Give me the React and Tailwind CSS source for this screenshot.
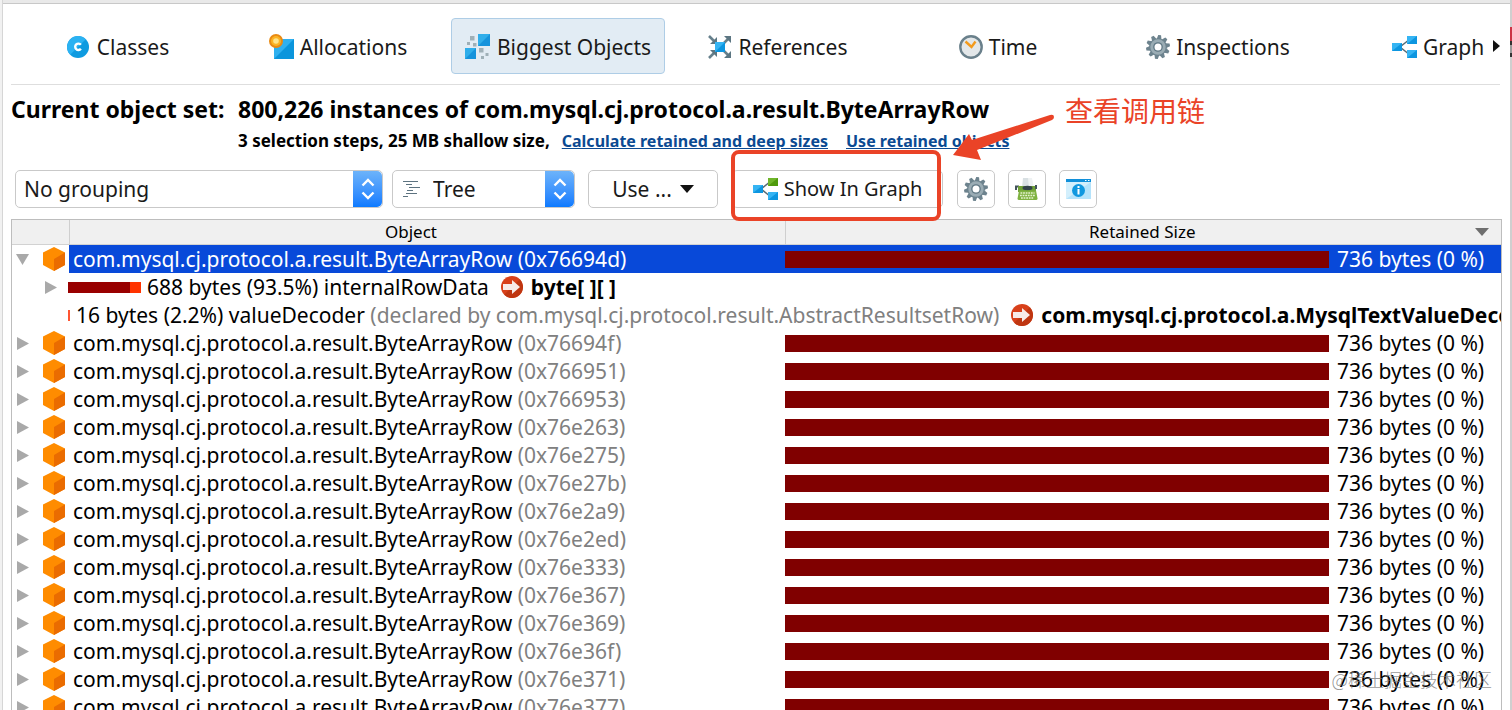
import React, { useState } from 'react';
import clsx from 'clsx';

const ADDRESSES = [
  '0x76694f',
  '0x766951',
  '0x766953',
  '0x76e263',
  '0x76e275',
  '0x76e27b',
  '0x76e2a9',
  '0x76e2ed',
  '0x76e333',
  '0x76e367',
  '0x76e369',
  '0x76e36f',
  '0x76e371',
  '0x76e377',
];

const CLASS_NAME = 'com.mysql.cj.protocol.a.result.ByteArrayRow';

const ClassesIcon = () => (
  <svg width="22" height="22" viewBox="0 0 22 22" aria-hidden="true">
    <circle cx="11" cy="11" r="11" fill="#0f9be0" />
    <path d="M3.2 18.8A11 11 0 0 1 18.8 3.2z" fill="#2bb2f2" />
    <path d="M13.9 8.8A3.200 3.200 0 1 0 13.9 12.800" fill="none" stroke="#fff" strokeWidth="2.400" />
  </svg>
);

const AllocationsIcon = () => (
  <svg width="25" height="26" viewBox="0 0 25 26" aria-hidden="true">
    <path d="M5 5h20v20H5z" fill="#0b95dc" />
    <path d="M5 5h20L5 25z" fill="#2fb0ef" />
    <circle cx="7" cy="7" r="7" fill="#e98a12" />
    <circle cx="7" cy="7" r="5" fill="#fbb324" />
    <circle cx="7" cy="7" r="2.8" fill="#ffe48a" />
  </svg>
);

const BiggestIcon = () => (
  <svg width="26" height="26" viewBox="0 0 26 26" aria-hidden="true">
    <path d="M13 0h12v12H13z M0 14h11v11H0z" fill="#1593dc" />
    <path d="M13 0h12L13 12z M0 14h11L0 25z" fill="#30aeea" />
    <path
      d="M5 2h4.500v4.500H5z M2 8h3v3H2z M8 9h3.500v3.500H8z M14 14h4.500v4.500H14z M20.500 19h3v3h-3z M16 22h3v3h-3z"
      fill="#9fb0b7"
    />
  </svg>
);

const ReferencesIcon = () => (
  <svg width="24" height="24" viewBox="0 0 24 24" aria-hidden="true">
    <g stroke="#66808c" strokeWidth="2.600" fill="none">
      <path d="M1 1l7 7 M1 23l7-7 M15 9l6-6 M15 15l6 6" />
    </g>
    <path d="M9 2v7H2z M9 22v-7H2z M16 1h7v7z M16 23h7v-7z" fill="#5c7682" />
    <path d="M7 7h10v10H7z" fill="#0d96e0" />
    <path d="M7 7h10L7 17z" fill="#35b4f3" />
  </svg>
);

const TimeIcon = () => (
  <svg width="24" height="24" viewBox="0 0 24 24" aria-hidden="true">
    <circle cx="12" cy="12" r="10.700" fill="#e3e7e9" stroke="#6a808b" strokeWidth="2.400" />
    <path d="M6.500 6.500l6 5.500 4-5.500" fill="none" stroke="#f39a1c" strokeWidth="2.400" />
  </svg>
);

const GearIcon = () => (
  <svg width="24" height="24" viewBox="0 0 24 24" aria-hidden="true">
    <g fill="#6d838e">
      {[0, 36, 72, 108, 144].map((a) => (
        <path key={a} d="M10.600 0h2.800l1 4v16l-1 4h-2.800l-1-4V4z" transform={`rotate(${a + 8} 12 12)`} />
      ))}
      <circle cx="12" cy="12" r="8.800" />
    </g>
    <circle cx="12" cy="12" r="7.700" fill="#9aacb4" />
    <circle cx="12" cy="12" r="4.800" fill="#5f7783" />
    <circle cx="12" cy="12" r="3.500" fill="#fff" />
  </svg>
);

const GraphIcon = ({ top = '#0d96e0', topLight = '#35b4f3' }) => (
  <svg width="25" height="24" viewBox="0 0 25 24" aria-hidden="true">
    <path d="M18 4L8 12l10 8" fill="none" stroke="#566b75" strokeWidth="1.500" />
    <path d="M15 1h10v8H15z" fill={top} />
    <path d="M15 1h10L15 9z" fill={topLight} />
    <path d="M15 15h10v8H15z M0 8h10v8H0z" fill="#0d96e0" />
    <path d="M15 15h10l-10 8z M0 8h10L0 16z" fill="#35b4f3" />
  </svg>
);

const TypewriterIcon = () => (
  <svg width="24" height="24" viewBox="0 0 24 24" aria-hidden="true">
    <path d="M8 1h6l1 10H7z" fill="#d9e0e3" />
    <path d="M13 1h4l2 10h-5z" fill="#eff2f3" />
    <path d="M1 13V9.500h3" fill="none" stroke="#44545c" strokeWidth="2" />
    <path d="M3 9h18v6H3z" fill="#6fa036" />
    <path d="M20 8h2v4h-2z" fill="#44545c" />
    <ellipse cx="12.500" cy="11" rx="5" ry="2.200" fill="#33424a" />
    <path d="M4 13.500h17l1.500 8q0 1.500-1.500 1.500H4q-1.500 0-1.500-1.500z" fill="#7fb241" />
    <path d="M5.500 16h14 M5 18.500h15 M6 21h13" stroke="#e5f2cf" strokeWidth="1.400" strokeDasharray="1.800 .8" />
  </svg>
);

const InfoWindowIcon = () => (
  <svg width="25" height="22" viewBox="0 0 25 22" aria-hidden="true">
    <path d="M0 1h25v20H0z" fill="#b5e3fb" />
    <path d="M0 4h25L0 21z" fill="#d3effc" />
    <path d="M0 1h25v3H0z" fill="#1190da" />
    <path d="M19 2h1.500v1H19z M22 2h1.500v1H22z" fill="#fff" />
    <circle cx="12.500" cy="12.500" r="6.500" fill="#1098e0" />
    <path d="M12.500 8v2 M12.500 11v5.500" stroke="#fff" strokeWidth="2" />
  </svg>
);

const TreeIcon = () => (
  <svg width="18" height="18" viewBox="0 0 18 18" aria-hidden="true">
    <path d="M0 1.500h15 M3 4.500h6 M6 7.500h11 M4 10.500h6 M3 13.500h11 M0 16.500h5" stroke="#5d7380" strokeWidth="1.200" />
  </svg>
);

const CubeIcon = () => (
  <svg width="22" height="24" viewBox="0 0 22 24" className="block" aria-hidden="true">
    <path d="M11 0l11 5.500v12.500L11 24 0 18V5.500z" fill="#ff8c00" />
    <path d="M22 5.500v12.500L11 24V12z" fill="#ea6c00" />
  </svg>
);

const ArrowBadge = () => (
  <svg width="22" height="22" viewBox="0 0 22 22" className="shrink-0" aria-hidden="true">
    <circle cx="11" cy="11" r="11" fill="#d8401a" />
    <path d="M18.800 3.200A11 11 0 0 1 3.200 18.800z" fill="#bf3611" />
    <path d="M2 8h9V4l8 7-8 7v-4H2z" fill="#f7ebe8" />
  </svg>
);

const Triangle = ({ open }) => (
  <svg width="13" height="13" viewBox="0 0 13 13" className="block" aria-hidden="true">
    <path d={open ? 'M0 1h13L6.500 12z' : 'M1 0l12 6.500L1 13z'} fill="#a9a9a9" />
  </svg>
);

const Stepper = () => (
  <span className="pointer-events-none flex w-[29px] shrink-0 items-center justify-center self-stretch rounded-r-[5px] bg-linear-to-b from-[#6cb3fa] to-[#0a7aff]">
    <svg width="14" height="22" viewBox="0 0 14 22" aria-hidden="true">
      <path d="M1.500 7.500L7 2l5.500 5.500 M1.500 14.500L7 20l5.500-5.500" fill="none" stroke="#fff" strokeWidth="2.400" />
    </svg>
  </span>
);

const TABS = [
  { name: 'Classes', icon: <ClassesIcon />, gap: 'gap-2' },
  { name: 'Allocations', icon: <AllocationsIcon />, gap: 'gap-1.5' },
  { name: 'Biggest Objects', icon: <BiggestIcon />, gap: 'gap-1.5' },
  { name: 'References', icon: <ReferencesIcon />, gap: 'gap-1.5' },
  { name: 'Time', icon: <TimeIcon />, gap: 'gap-1.5' },
  { name: 'Inspections', icon: <GearIcon />, gap: 'gap-1.5' },
  { name: 'Graph', icon: <GraphIcon />, gap: 'gap-1.5' },
];

const BUTTON = 'flex h-[38px] items-center justify-center rounded-[5px] border border-[#c9c9c9] bg-white';

const RetainedSize = () => (
  <div className="flex items-center">
    <div className="h-[17px] flex-1 bg-[#800000]" />
    <span className="w-[172px] pl-2 whitespace-nowrap">736 bytes (0 %)</span>
  </div>
);

const ObjectRow = ({ address, selected, open }) => (
  <tr className="h-7">
    <td className="p-0">
      <div className="flex items-center justify-between pr-1 pl-1">
        <button type="button" aria-label={open ? 'Collapse' : 'Expand'}>
          <Triangle open={open} />
        </button>
        <CubeIcon />
      </div>
    </td>
    <td className={clsx('p-0 pl-1 whitespace-nowrap', selected && 'bg-[#0849d9] text-white')}>
      {CLASS_NAME} <span className={selected ? 'text-white' : 'text-[#808080]'}>({address})</span>
    </td>
    <td className={clsx('p-0', selected && 'bg-[#0849d9] text-white')}>
      <RetainedSize />
    </td>
  </tr>
);

// Red marker, arrow and caption drawn over the "Show In Graph" button
const Annotation = () => (
  <div className="pointer-events-none">
    <div className="absolute -top-5 right-0.5 -bottom-[13px] -left-px rounded-lg border-4 border-[#ea4327]" />
    <svg width="104" height="50" viewBox="0 0 104 50" className="absolute -top-[58px] left-[220px]" aria-hidden="true">
      <path d="M1 43L17 22l3 6L98 3q4-1 4 2 0 2-2 3L25 38l4 10z" fill="#ea4327" />
    </svg>
    <span className="absolute -top-20 left-[333px] font-['Noto_Sans_CJK_SC',sans-serif] text-[28px] leading-10 whitespace-nowrap text-[#ea4327]">
      查看调用链
    </span>
  </div>
);

const App = () => {
  const [activeTab, setActiveTab] = useState('Biggest Objects');

  return (
    <div className="relative flex h-screen overflow-hidden bg-[#f1f1f1] pl-0.5 font-['Noto_Sans','Noto_Sans_CJK_SC',sans-serif] text-[21px] leading-7 text-black">
      <main className="flex min-w-0 flex-1 flex-col border-l border-[#d6d6d6] bg-white">
        <div className="h-1 shrink-0 border-b border-[#c8c8c8] bg-[#e9e9e9]" />

        {/* View selector */}
        <nav className="mr-2.5 ml-2 flex h-[81px] shrink-0 items-center border-b border-[#dedede] pt-1">
          <div className="flex min-w-0 flex-1 gap-1.5 overflow-hidden">
            {TABS.map((tab) => (
              <button
                key={tab.name}
                type="button"
                onClick={() => setActiveTab(tab.name)}
                className={clsx(
                  'flex h-14 w-[214px] shrink-0 items-center justify-center rounded-sm border pt-px text-[#1a1a1a]',
                  tab.gap,
                  activeTab === tab.name ? 'border-[#aecde6] bg-[#e2ecf4]' : 'border-transparent'
                )}
              >
                {tab.icon}
                {tab.name}
              </button>
            ))}
          </div>
          <button type="button" aria-label="More views">
            <svg width="7" height="12" viewBox="0 0 7 12" aria-hidden="true">
              <path d="M0 0l7 6-7 6z" fill="#111" />
            </svg>
          </button>
        </nav>

        {/* Object set summary */}
        <div className="grid shrink-0 grid-cols-[227px_1fr] pt-2 pl-2 font-bold">
          <h1 className="text-[23px] leading-8">Current object set:</h1>
          <p className="text-[23px] leading-8">800,226 instances of {CLASS_NAME}</p>
          <p className="col-start-2 flex gap-3 text-base leading-8 whitespace-nowrap">
            <span className="text-[17px]">3 selection steps, 25 MB shallow size,</span>
            <a href="#sizes" className="text-[#0b4a92] underline">Calculate retained and deep sizes</a>
            <a href="#retained" className="ml-1.5 text-[#0b4a92] underline">Use retained objects</a>
          </p>
        </div>

        {/* Controls */}
        <div className="flex shrink-0 items-center pt-[13px] pb-[11px] pl-3 text-[#1a1a1a]">
          <div className="flex h-[38px] w-[368px] rounded-[5px] border border-[#c9c9c9]">
            <select aria-label="Grouping" className="min-w-0 flex-1 appearance-none pl-2 outline-none">
              <option>No grouping</option>
            </select>
            <Stepper />
          </div>
          <div className="ml-[9px] flex h-[38px] w-[183px] items-center rounded-[5px] border border-[#c9c9c9] pl-2.5">
            <TreeIcon />
            <select aria-label="View mode" className="min-w-0 flex-1 appearance-none pl-3 outline-none">
              <option>Tree</option>
            </select>
            <Stepper />
          </div>
          <button type="button" className={clsx(BUTTON, 'ml-[13px] w-[130px] gap-2')}>
            Use ...
            <svg width="14" height="8" viewBox="0 0 14 8" aria-hidden="true">
              <path d="M0 0h14L7 8z" fill="#111" />
            </svg>
          </button>
          <div className="relative ml-[14px]">
            <button type="button" className={clsx(BUTTON, 'w-[211px] gap-1.5 text-xl')}>
              <GraphIcon top="#4f9a0c" topLight="#6fb52a" />
              Show In Graph
            </button>
            <Annotation />
          </div>
          <div className="ml-3.5 flex gap-[13px]">
            <button type="button" aria-label="Settings" className={clsx(BUTTON, 'w-[38px]')}><GearIcon /></button>
            <button type="button" aria-label="Script" className={clsx(BUTTON, 'w-[38px]')}><TypewriterIcon /></button>
            <button type="button" aria-label="Info" className={clsx(BUTTON, 'w-[38px]')}><InfoWindowIcon /></button>
          </div>
        </div>

        {/* Objects */}
        <div className="mr-2 ml-2 flex-1 overflow-hidden border border-b-0 border-[#bdbdbd]">
          <table className="w-full table-fixed border-collapse">
            <colgroup>
              <col className="w-[57px]" />
              <col />
              <col />
            </colgroup>
            <thead>
              <tr className="h-6 border-b border-[#d2d2d2] bg-[#f0f0f0] text-[17px] leading-6">
                <th className="border-r border-[#cfcfcf] p-0" aria-label="Expand" />
                <th className="border-r border-[#cfcfcf] p-0 pr-8 font-normal">Object</th>
                <th className="p-0 font-normal">
                  <div className="flex items-center pr-3">
                    <span className="flex-1 pl-6">Retained Size</span>
                    <svg width="14" height="8" viewBox="0 0 14 8" aria-hidden="true">
                      <path d="M0 0h14L7 8z" fill="#6e6e6e" />
                    </svg>
                  </div>
                </th>
              </tr>
            </thead>
            <tbody>
              <ObjectRow address="0x76694d" selected open />
              <tr className="h-7">
                <td className="p-0" colSpan={3}>
                  <div className="flex items-center pl-8 whitespace-nowrap">
                    <button type="button" aria-label="Expand"><Triangle /></button>
                    <span className="ml-[11px] flex h-[11px] w-[73px]">
                      <span className="flex-1 bg-[#990000]" />
                      <span className="w-[11px] bg-[#ff3300]" />
                    </span>
                    <span className="ml-1.5">688 bytes (93.5%) internalRowData</span>
                    <span className="ml-3 flex items-center gap-2 font-bold"><ArrowBadge />byte[ ][ ]</span>
                  </div>
                </td>
              </tr>
              <tr className="h-7">
                <td className="overflow-hidden p-0" colSpan={3}>
                  <div className="flex items-center pl-14 whitespace-nowrap">
                    <span className="h-[11px] w-0.5 shrink-0 bg-[#ff5533]" />
                    <span className="ml-1.5">
                      16 bytes (2.2%) valueDecoder{' '}
                      <span className="text-[#808080]">(declared by com.mysql.cj.protocol.result.AbstractResultsetRow)</span>
                    </span>
                    <span className="ml-3 flex items-center gap-2 font-bold">
                      <ArrowBadge />com.mysql.cj.protocol.a.MysqlTextValueDecoder
                    </span>
                  </div>
                </td>
              </tr>
              {ADDRESSES.map((address) => (
                <ObjectRow key={address} address={address} />
              ))}
            </tbody>
          </table>
        </div>
      </main>

      {/* Sliver of the window behind */}
      <div className="flex w-0.5 flex-col bg-[#cfcfcf] pt-[27px]">
        <div className="h-3.5 bg-[#cc3344]" />
        <div className="h-4 border-y-4 border-[#333333] bg-[#999999]" />
      </div>

      <span className="absolute right-[20px] bottom-[17px] font-['Noto_Sans_CJK_SC',sans-serif] text-lg leading-7 font-light text-[#777777]/80">
        @稀土掘金技术社区
      </span>
    </div>
  );
};

export default App;
